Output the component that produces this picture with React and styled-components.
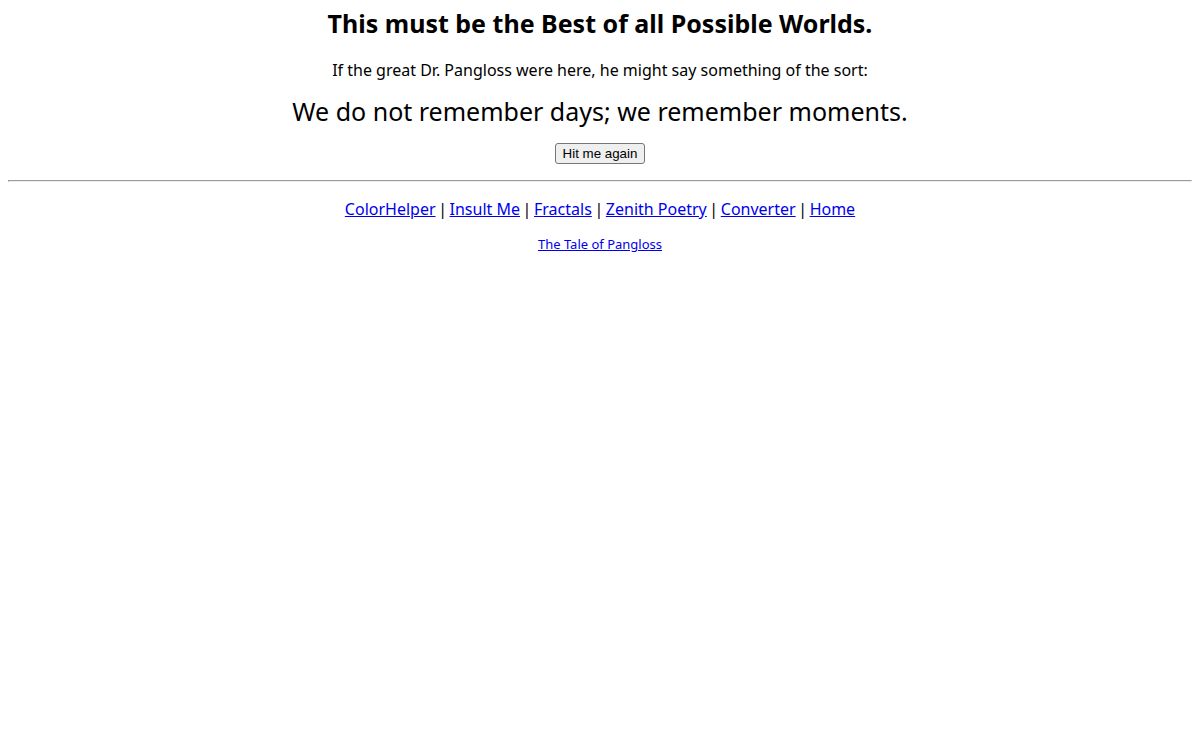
import React from 'react';
import styled, { createGlobalStyle } from 'styled-components';

const links = ['ColorHelper', 'Insult Me', 'Fractals', 'Zenith Poetry', 'Converter', 'Home'];

const App = () => (
  <>
    <GlobalStyle />
    <Root>
      <Title>This must be the Best of all Possible Worlds.</Title>
      <Intro>If the great Dr. Pangloss were here, he might say something of the sort:</Intro>
      <Quote>We do not remember days; we remember moments.</Quote>
      <Button type="button">Hit me again</Button>
      <Divider />
      <Nav>
        {links.map((name, i) => (
          <React.Fragment key={name}>
            {i > 0 && <Separator>|</Separator>}
            <Link href="#">{name}</Link>
          </React.Fragment>
        ))}
      </Nav>
      <Footer>
        <Link href="#">The Tale of Pangloss</Link>
      </Footer>
    </Root>
  </>
);

export default App;

const GlobalStyle = createGlobalStyle`
  body {
    margin: 8px;
    background: #fff;
    color: #000;
    font-family: 'Noto Sans', 'Open Sans', sans-serif;
  }
`;

const Root = styled.main`
  display: flex;
  flex-direction: column;
  align-items: center;
  text-align: center;
`;

const Title = styled.h1`
  margin: 0;
  font-size: 25px;
  line-height: 30px;
  font-weight: 700;
`;

const Intro = styled.p`
  margin: 22px 0 0;
  font-size: 16px;
  line-height: 20px;
`;

const Quote = styled.p`
  margin: 16px 0 0;
  font-size: 25px;
  line-height: 30px;
`;

const Button = styled.button`
  margin: 17px 0 0;
  padding: 2px 7px;
  border: 1px solid #767676;
  border-radius: 3px;
  background: #efefef;
  color: #000;
  font-family: 'Liberation Sans', Arial, sans-serif;
`;

const Divider = styled.hr`
  width: 100%;
  box-sizing: border-box;
  margin: 16px 0;
  border: 1px solid;
  border-color: #9a9a9a #eee #eee #9a9a9a;
`;

const Nav = styled.nav`
  display: flex;
  flex-wrap: wrap;
  justify-content: center;
  font-size: 16px;
  line-height: 22px;
`;

const Separator = styled.span`
  width: 14px;
`;

const Footer = styled.footer`
  margin-top: 16px;
  font-size: 13px;
  line-height: 16px;
`;

const Link = styled.a`
  color: #0000ee;
`;
